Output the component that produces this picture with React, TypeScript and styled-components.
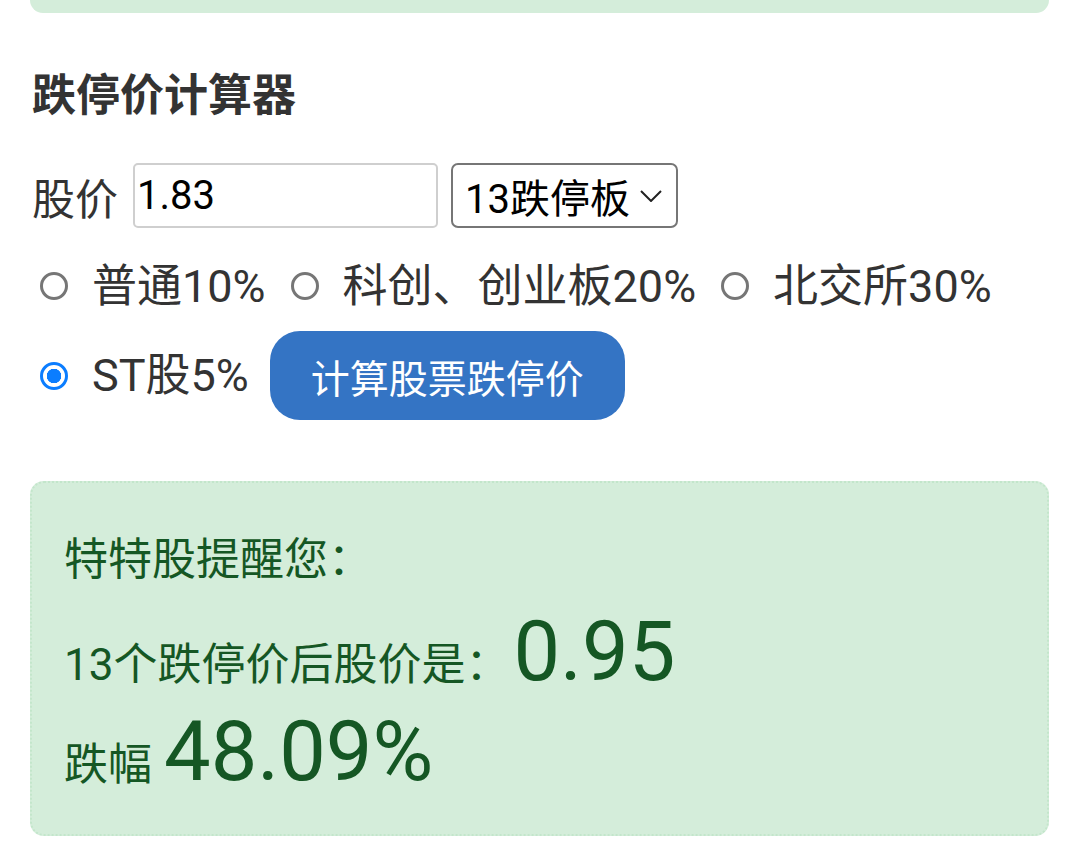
import React, { useState } from 'react';
import styled, { createGlobalStyle } from 'styled-components';

const GlobalStyle = createGlobalStyle`
    body {
        margin: 0;
        background: #fff;
        font-family: Roboto, "Noto Sans CJK SC", sans-serif;
        color: #333;
    }
`;

const Page = styled.div`
    padding: 0 30px;
`;

const TopBox = styled.div`
    height: 13px;
    background: #d4edda;
    border-radius: 0 0 16px 16px;
`;

const Title = styled.h2`
    margin: 53px 0 0 2px;
    font-size: 44px;
    line-height: 60px;
    font-weight: bold;
    color: #333;
`;

const PriceRow = styled.div`
    display: flex;
    align-items: center;
    margin: 37px 0 0 2px;
    height: 65px;
`;

const Label = styled.span`
    font-size: 43px;
    color: #333;
    margin-right: 15px;
`;

const PriceInput = styled.input`
    box-sizing: border-box;
    width: 305px;
    height: 65px;
    border: 2px solid #cfcfcf;
    border-radius: 5px;
    padding: 0 2px;
    font-family: Roboto, "Noto Sans CJK SC", sans-serif;
    font-size: 40px;
    color: #000;
    outline: none;
`;

const SelectBox = styled.div`
    box-sizing: border-box;
    display: flex;
    align-items: center;
    justify-content: space-between;
    margin-left: 13px;
    width: 227px;
    height: 65px;
    border: 2px solid #767676;
    border-radius: 7px;
    padding: 0 14px 0 12px;
    font-size: 40px;
    color: #000;
`;

const Options = styled.div`
    display: flex;
    flex-wrap: wrap;
    align-items: center;
    row-gap: 15px;
    margin-top: 28px;
`;

const Option = styled.label`
    box-sizing: border-box;
    display: flex;
    align-items: center;
    height: 60px;
    padding-bottom: 8px;
    font-size: 45px;
    color: #333;
    margin-right: 15px;
`;

const Radio = styled.input.attrs({ type: 'radio' })`
    appearance: none;
    box-sizing: border-box;
    width: 28px;
    height: 28px;
    margin: 8px 24px 0 10px;
    border-radius: 50%;
    border: 3px solid #767676;
    background: #fff;

    &:checked {
        border-color: #0b7dff;
        background: radial-gradient(circle, #0b7dff 0 7px, #fff 7.5px);
    }
`;

const CalcButton = styled.button`
    height: 89px;
    padding: 0 41px;
    margin-left: 6px;
    border: none;
    border-radius: 30px;
    background: #3474c4;
    color: #fff;
    font-family: Roboto, "Noto Sans CJK SC", sans-serif;
    font-size: 39px;
`;

const Result = styled.div`
    margin-top: 61px;
    box-sizing: border-box;
    height: 355px;
    padding: 27px 32px 0;
    background: #d4edda;
    border: 2px dotted #c3e6cb;
    border-radius: 14px;
    color: #155724;
`;

const Line = styled.div`
    height: 100px;
    line-height: 100px;
    font-size: 44px;
    white-space: nowrap;
`;

const Big = styled.span<{ gap: number }>`
    font-size: 83px;
    line-height: 1;
    margin-left: ${(p) => p.gap}px;
`;

const options = ['普通10%', '科创、创业板20%', '北交所30%', 'ST股5%'];

const App = () => {
    const [picked, setPicked] = useState(3);

    return (
        <>
            <GlobalStyle />
            <Page>
                <TopBox />
                <Title>跌停价计算器</Title>
                <PriceRow>
                    <Label>股价</Label>
                    <PriceInput defaultValue="1.83" />
                    <SelectBox>
                        <span>13跌停板</span>
                        <svg width="22" height="12" viewBox="0 0 22 12">
                            <path d="M1 1 L11 11 L21 1" fill="none" stroke="#222" strokeWidth="2" />
                        </svg>
                    </SelectBox>
                </PriceRow>
                <Options>
                    {options.map((o, i) => (
                        <Option key={o}>
                            <Radio name="kind" checked={picked === i} onChange={() => setPicked(i)} />
                            {o}
                        </Option>
                    ))}
                    <CalcButton>计算股票跌停价</CalcButton>
                </Options>
                <Result>
                    <Line>特特股提醒您：</Line>
                    <Line>
                        13个跌停价后股价是：<Big gap={4}>0.95</Big>
                    </Line>
                    <Line>
                        跌幅<Big gap={12}>48.09%</Big>
                    </Line>
                </Result>
            </Page>
        </>
    );
};

export default App;
